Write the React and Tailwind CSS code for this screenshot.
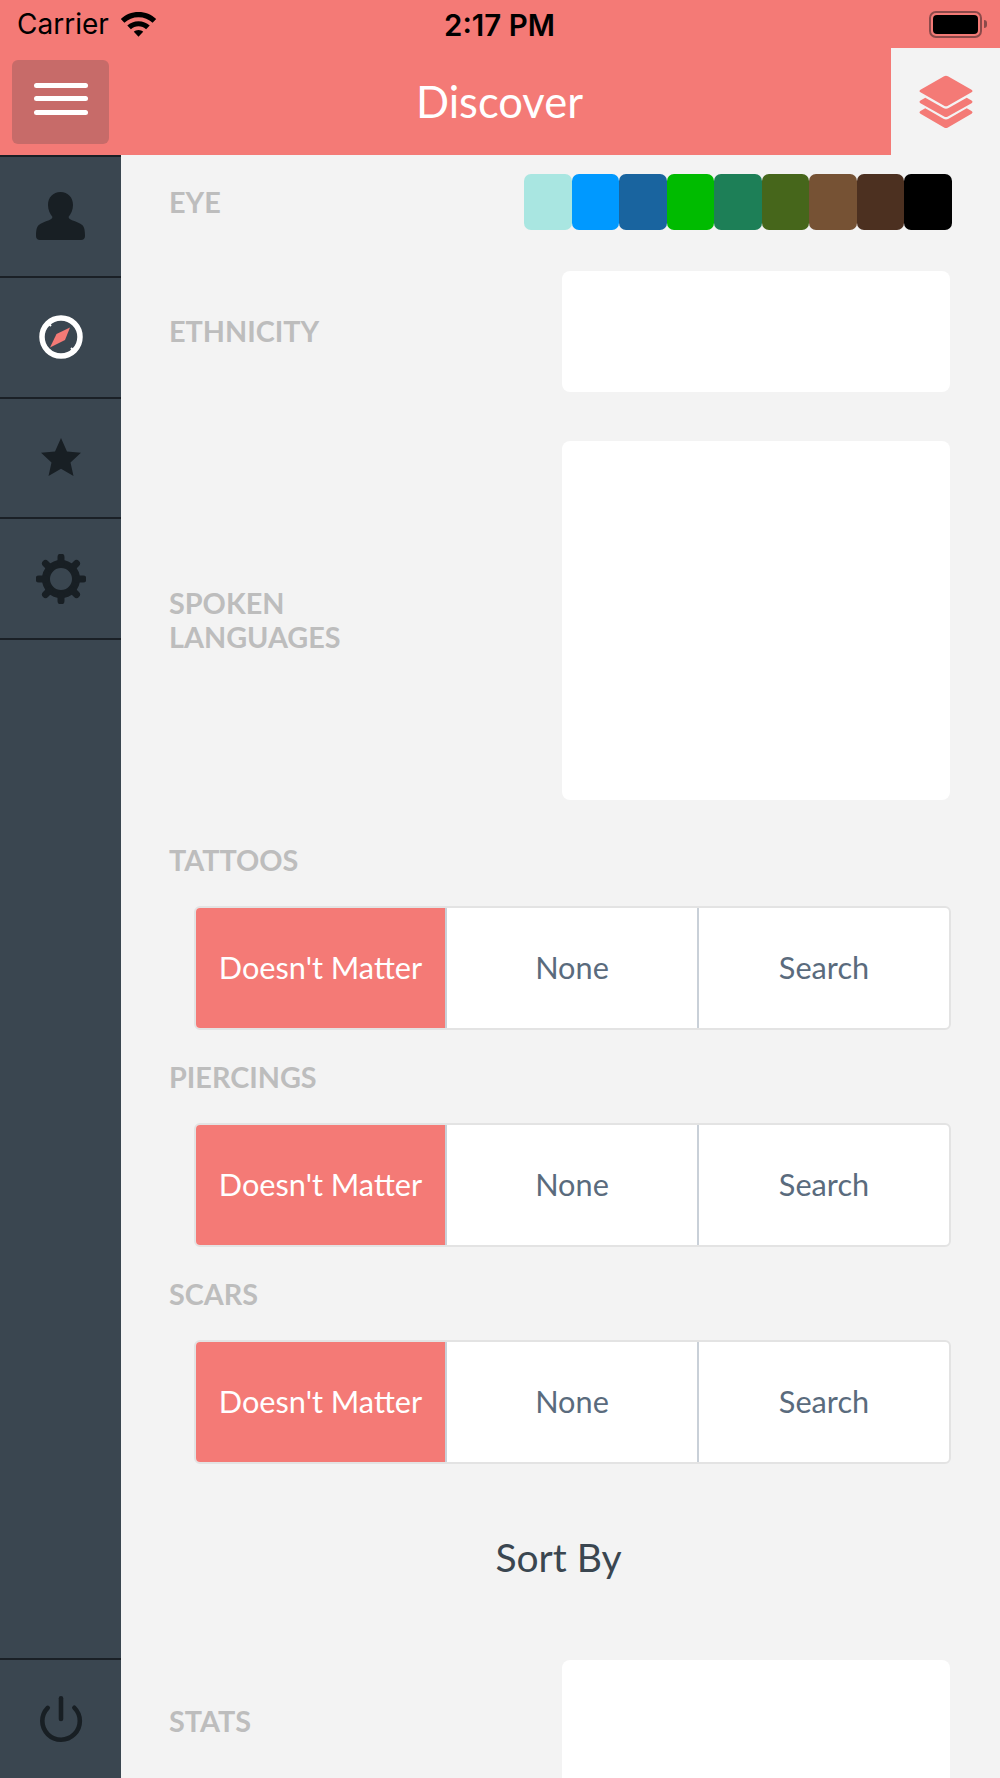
import React from 'react';
import { Power } from 'lucide-react';

const swatches = ['bg-[#a9e6e1]', 'bg-[#0099ff]', 'bg-[#19649f]', 'bg-[#00bb00]', 'bg-[#1d7f57]', 'bg-[#46661b]', 'bg-[#765234]', 'bg-[#4c3020]', 'bg-[#000000]'];

const Label = ({ children, className = '' }) => (
  <div className={`text-[28.8px] font-bold uppercase leading-[34px] text-[#bdbdbd] ${className}`}>{children}</div>
);

const Segmented = () => (
  <div className="ml-[25px] mr-[49px] flex h-[124px] rounded-[6px] border-2 border-[#e3e3e3] bg-white text-[30.7px] text-[#5a6b7d]">
    <div className="flex w-[251px] items-center justify-center rounded-l-[4px] border-r-2 border-[#c9d0d8] bg-[#f47a76] text-white">Doesn't Matter</div>
    <div className="flex w-[252px] items-center justify-center border-r-2 border-[#c9d0d8]">None</div>
    <div className="flex flex-1 items-center justify-center">Search</div>
  </div>
);

const SideItem = ({ children }) => (
  <div className="flex h-[120.75px] items-center justify-center border-b-2 border-[#1a2026]">{children}</div>
);

export default function App() {
  return (
    <div className="flex h-[1778px] w-[1000px] flex-col overflow-hidden bg-[#f3f3f3] font-['Lato',sans-serif]">
      <div className="relative flex h-[48px] items-center justify-between bg-[#f47a76] pl-[17px] pr-[13px] text-black">
        <div className="flex items-center gap-[11px] font-['Inter',sans-serif] text-[28px]">
          <span>Carrier</span>
          <svg width="37" height="27" viewBox="0 0 37 27" fill="black">
            <path d="M18.5 1C11.5 1 5.5 3.6 .8 8l3.6 3.8C8.2 8.3 13 6.3 18.5 6.3s10.3 2 14.1 5.5L36.2 8C31.5 3.6 25.5 1 18.5 1z" />
            <path d="M18.5 10.2c-4.4 0-8.3 1.6-11.2 4.3l3.6 3.8c2-1.800 4.700-3 7.600-3s5.600 1.200 7.600 3l3.600-3.800c-2.900-2.700-6.800-4.300-11.200-4.300z" />
            <path d="M18.500 19c-1.900 0-3.500.700-4.700 1.800l4.700 5 4.700-5c-1.200-1.100-2.800-1.800-4.700-1.800z" />
          </svg>
        </div>
        <div className="absolute left-[444px] top-[8px] font-['Inter',sans-serif] text-[29.5px] font-semibold leading-[35px]">2:17 PM</div>
        <div className="flex items-center gap-[2px]">
          <div className="h-[27px] w-[53px] rounded-[7px] border-2 border-[#8c4a4a] p-[2px]">
            <div className="h-full w-full rounded-[4px] bg-black" />
          </div>
          <div className="h-[8px] w-[3px] rounded-r-full bg-[#8c4a4a]" />
        </div>
      </div>

      <div className="flex h-[107px]">
        <div className="relative flex flex-1 items-center justify-center bg-[#f47a76] pl-[108px] pt-[1px] text-[43.5px] text-white">
          <div className="absolute left-[12px] top-[12px] flex h-[84px] w-[97px] flex-col items-center justify-center gap-[8.5px] rounded-[6px] bg-[#c76b69] pb-[7px]">
            <div className="h-[5px] w-[54px] rounded-full bg-white" />
            <div className="h-[5px] w-[54px] rounded-full bg-white" />
            <div className="h-[5px] w-[54px] rounded-full bg-white" />
          </div>
          <span>Discover</span>
        </div>
        <div className="flex w-[109px] items-center justify-center">
          <svg width="54" height="54" viewBox="0 0 56 56" fill="#f47a76">
            <path d="M26 1.200c1.200-.7 2.800-.7 4 0l24.500 14c1.300.8 1.300 2 0 2.800L30 32c-1.200.7-2.800.7-4 0L1.500 18c-1.300-.8-1.300-2 0-2.800z" />
            <path d="M6.500 23.500l18.800 10.800c1.700 1 3.700 1 5.400 0l18.800-10.800 5 2.900c1.300.8 1.300 2 0 2.800L30 43c-1.200.7-2.800.7-4 0L1.500 29.200c-1.300-.8-1.300-2 0-2.800z" />
            <path d="M6.500 34.500l18.800 10.800c1.700 1 3.700 1 5.400 0l18.800-10.800 5 2.900c1.300.8 1.300 2 0 2.800L30 54.500c-1.200.7-2.800.7-4 0L1.500 40.200c-1.300-.8-1.300-2 0-2.800z" />
          </svg>
        </div>
      </div>

      <div className="flex min-h-0 flex-1">
        <div className="flex w-[121px] shrink-0 flex-col justify-between border-t-2 border-[#1a2026] bg-[#3a4650]">
          <div>
            <SideItem>
              <svg width="49" height="48" viewBox="0 0 49 48" fill="#181f24">
                <path d="M24.500 0c7.500 0 12.500 5.500 12.500 13 0 5-2 9-4.500 12 .5 1.500 1.500 2.500 3.500 3.200 4 1.300 8 2.800 10.500 5 1.500 1.500 2.500 4.500 2.500 10.800 0 2.500-1.500 4-4 4H4c-2.500 0-4-1.500-4-4 0-6.300 1-9.300 2.500-10.800 2.500-2.200 6.500-3.700 10.500-5 2-.7 3-1.700 3.500-3.200-2.500-3-4.500-7-4.500-12 0-7.500 5-13 12.500-13z" />
              </svg>
            </SideItem>
            <SideItem>
              <svg width="44" height="44" viewBox="0 0 44 44">
                <circle cx="22" cy="22" r="19" fill="none" stroke="white" strokeWidth="5.5" />
                <path d="M9 8l3 3M35 36l-3-3" stroke="white" strokeWidth="2" />
                <path d="M31 12.500L26 25l-15 7.500 6.500-13.500z" fill="#f47a76" />
              </svg>
            </SideItem>
            <SideItem>
              <svg className="mb-[2px]" width="40" height="38" viewBox="0 0 40 38" fill="#181f24">
                <path d="M20 0l6 13.500 14 1.300-10.500 9.600 3 13.600L20 30.800 7.500 38l3-13.600L0 14.800l14-1.300z" />
              </svg>
            </SideItem>
            <SideItem>
              <svg width="50" height="50" viewBox="0 0 50 50">
                <circle cx="25" cy="25" r="15" fill="none" stroke="#181f24" strokeWidth="8" />
                <g stroke="#181f24" strokeWidth="7" strokeLinecap="round">
                  <path d="M25 3v6M25 41v6M3 25h6M41 25h6M9.500 9.500l4 4M36.500 36.500l4 4M9.500 40.500l4-4M36.500 13.500l4-4" />
                </g>
              </svg>
            </SideItem>
          </div>
          <div className="flex h-[120px] items-center justify-center border-t-2 border-[#1a2026]">
            <Power size={50} color="#181f24" strokeWidth={2.2} />
          </div>
        </div>

        <div className="min-w-0 flex-1 pl-[48px]">
          <div className="mt-[19px] flex h-[56px] items-center justify-between pr-[48.5px]">
            <Label>Eye</Label>
            <div className="flex">
              {swatches.map((c) => (
                <div key={c} className={`h-[56px] w-[47.5px] rounded-[7px] ${c}`} />
              ))}
            </div>
          </div>

          <div className="mt-[41px] flex h-[121px] items-center justify-between pr-[50px]">
            <Label className="mb-[2px]">Ethnicity</Label>
            <div className="h-full w-[388px] rounded-[8px] bg-white" />
          </div>

          <div className="mt-[49px] flex h-[359px] items-center justify-between pr-[50px]">
            <Label className="mb-[2px]">Spoken<br />Languages</Label>
            <div className="h-full w-[388px] rounded-[8px] bg-white" />
          </div>

          <Label className="mt-[43px]">Tattoos</Label>
          <div className="mt-[29px]"><Segmented /></div>

          <Label className="mt-[30px]">Piercings</Label>
          <div className="mt-[29px]"><Segmented /></div>

          <Label className="mt-[30px]">Scars</Label>
          <div className="mt-[29px]"><Segmented /></div>

          <div className="mt-[70px] pr-[52px] text-center text-[39px] leading-[46px] text-[#3a4650]">Sort By</div>

          <div className="mt-[80px] flex h-[150px] items-start justify-between pr-[50px]">
            <Label className="mt-[44px]">Stats</Label>
            <div className="h-full w-[388px] rounded-[8px] bg-white" />
          </div>
        </div>
      </div>
    </div>
  );
}
